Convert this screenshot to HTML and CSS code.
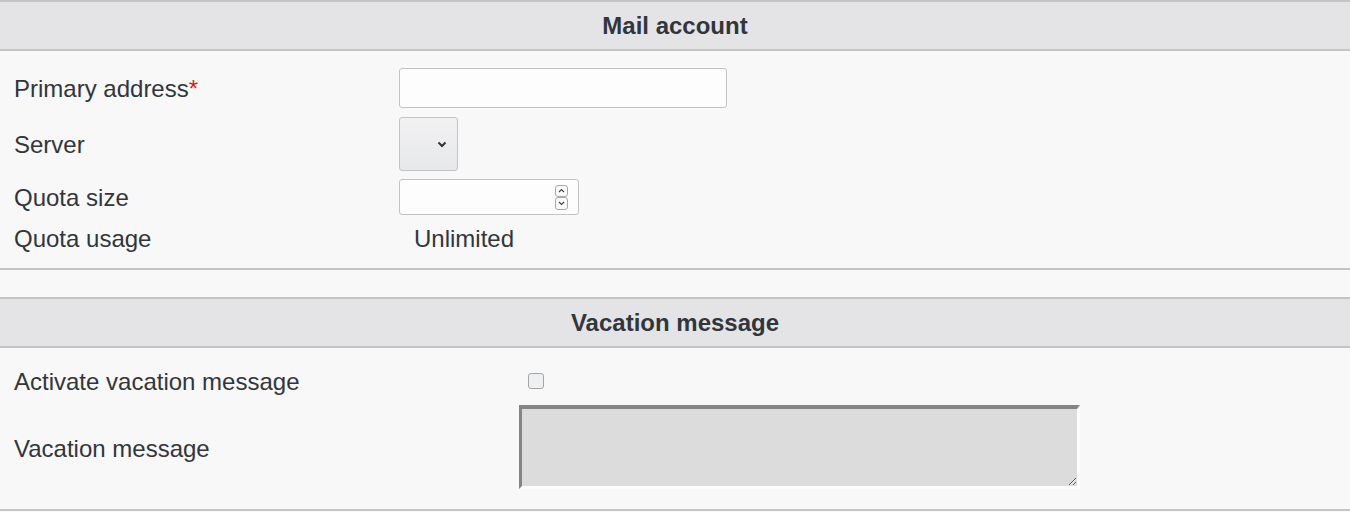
FILE: index.html
```html
<!DOCTYPE html>
<html lang="en">
<head>
<meta charset="utf-8">
<title>Mail account</title>
<link rel="stylesheet" href="styles.css">
</head>
<body>
<section class="section">
  <h2 class="head">Mail account</h2>
  <div class="grid grid-mail">
    <div class="label">Primary address<span class="req">*</span></div>
    <div class="cell"><input class="text-input" type="text"></div>

    <div class="label">Server</div>
    <div class="cell">
      <div class="select">
        <svg class="chev" width="10" height="7" viewBox="0 0 10 7"><path d="M1.5 1.5 L5 5 L8.5 1.5" fill="none" stroke="#333" stroke-width="2"/></svg>
      </div>
    </div>

    <div class="label">Quota size</div>
    <div class="cell">
      <div class="numbox">
        <input class="num-input" type="text">
        <div class="spin">
          <div class="spin-btn"><svg width="7" height="5" viewBox="0 0 7 5"><path d="M1 4 L3.5 1.5 L6 4" fill="none" stroke="#444" stroke-width="1.1"/></svg></div>
          <div class="spin-btn"><svg width="7" height="5" viewBox="0 0 7 5"><path d="M1 1 L3.5 3.5 L6 1" fill="none" stroke="#444" stroke-width="1.1"/></svg></div>
        </div>
      </div>
    </div>

    <div class="label label-last">Quota usage</div>
    <div class="cell value">Unlimited</div>
  </div>
</section>

<section class="section">
  <h2 class="head">Vacation message</h2>
  <div class="grid grid-vac">
    <div class="label label-check">Activate vacation message</div>
    <div class="cell"><input class="check" type="checkbox"></div>

    <div class="label label-area">Vacation message</div>
    <div class="cell"><textarea class="area" disabled></textarea></div>
  </div>
</section>
</body>
</html>
```

FILE: styles.css
```css
html, body {
  margin: 0;
  padding: 0;
  background: #f8f8f8;
}

body {
  font-family: "Liberation Sans", Arial, sans-serif;
  font-size: 24px;
  color: #31363b;
}

.section {
  border-bottom: 2px solid #c4c4c4;
}

.section + .section {
  margin-top: 27px;
}

.head {
  margin: 0;
  height: 47px;
  line-height: 48px;
  background: #e4e4e6;
  border-top: 2px solid #c4c4c4;
  border-bottom: 2px solid #c4c4c4;
  text-align: center;
  font-size: 24px;
  font-weight: bold;
  color: #31363b;
}

.grid {
  display: grid;
  align-items: center;
}

.grid-mail {
  grid-template-columns: 399px 1fr;
  padding: 13px 0 11px;
}

.grid-vac {
  grid-template-columns: 519px 1fr;
  padding: 12px 0 12px;
}

.label {
  padding-left: 14px;
  padding-top: 2px;
  line-height: 28px;
}

.label-check {
  padding-top: 1px;
}

.label-area {
  padding-top: 0;
  padding-bottom: 2px;
}

.req {
  color: #e01b24;
}

.cell {
  display: flex;
  align-items: center;
}

.text-input {
  box-sizing: border-box;
  width: 328px;
  height: 40px;
  margin: 4px 0;
  border: 1px solid #c3c3c3;
  border-radius: 3px;
  background: #fdfdfd;
  font: inherit;
  padding: 0 8px;
}

.select {
  box-sizing: border-box;
  width: 59px;
  height: 54px;
  margin: 5px 0 4px;
  border: 1px solid #c3c3c3;
  border-radius: 3px;
  background: linear-gradient(#f1f1f2, #e7e8ea);
  display: flex;
  align-items: center;
  justify-content: flex-end;
  padding-right: 10px;
}

.chev {
  display: block;
}

.numbox {
  box-sizing: border-box;
  width: 180px;
  height: 36px;
  margin: 4px 0;
  border: 1px solid #c3c3c3;
  border-radius: 3px;
  background: #fdfdfd;
  display: flex;
  align-items: center;
  padding-right: 10px;
}

.num-input {
  flex: 1;
  min-width: 0;
  border: none;
  background: transparent;
  font: inherit;
  outline: none;
}

.spin {
  display: flex;
  flex-direction: column;
}

.spin-btn {
  box-sizing: border-box;
  width: 13px;
  height: 12.5px;
  border: 1px solid #a9a9a9;
  border-radius: 3px;
  background: #fafafa;
  display: flex;
  align-items: center;
  justify-content: center;
}

.label-last {
  line-height: 36px;
}

.value {
  padding-left: 15px;
  padding-top: 2px;
  line-height: 36px;
}

.check {
  appearance: none;
  -webkit-appearance: none;
  box-sizing: border-box;
  width: 16px;
  height: 16px;
  margin: 13px 0 13px 9px;
  border: 1px solid #a6a6a6;
  border-radius: 3px;
  background: #eef0f2;
}

.area {
  box-sizing: border-box;
  width: 561px;
  height: 84px;
  margin: 3px 0 8px;
  border-style: solid;
  border-width: 4px 3px 3px 3px;
  border-color: #858585 #fdfdfd #fdfdfd #858585;
  background: #dcdcdc;
  padding: 0;
}
```
